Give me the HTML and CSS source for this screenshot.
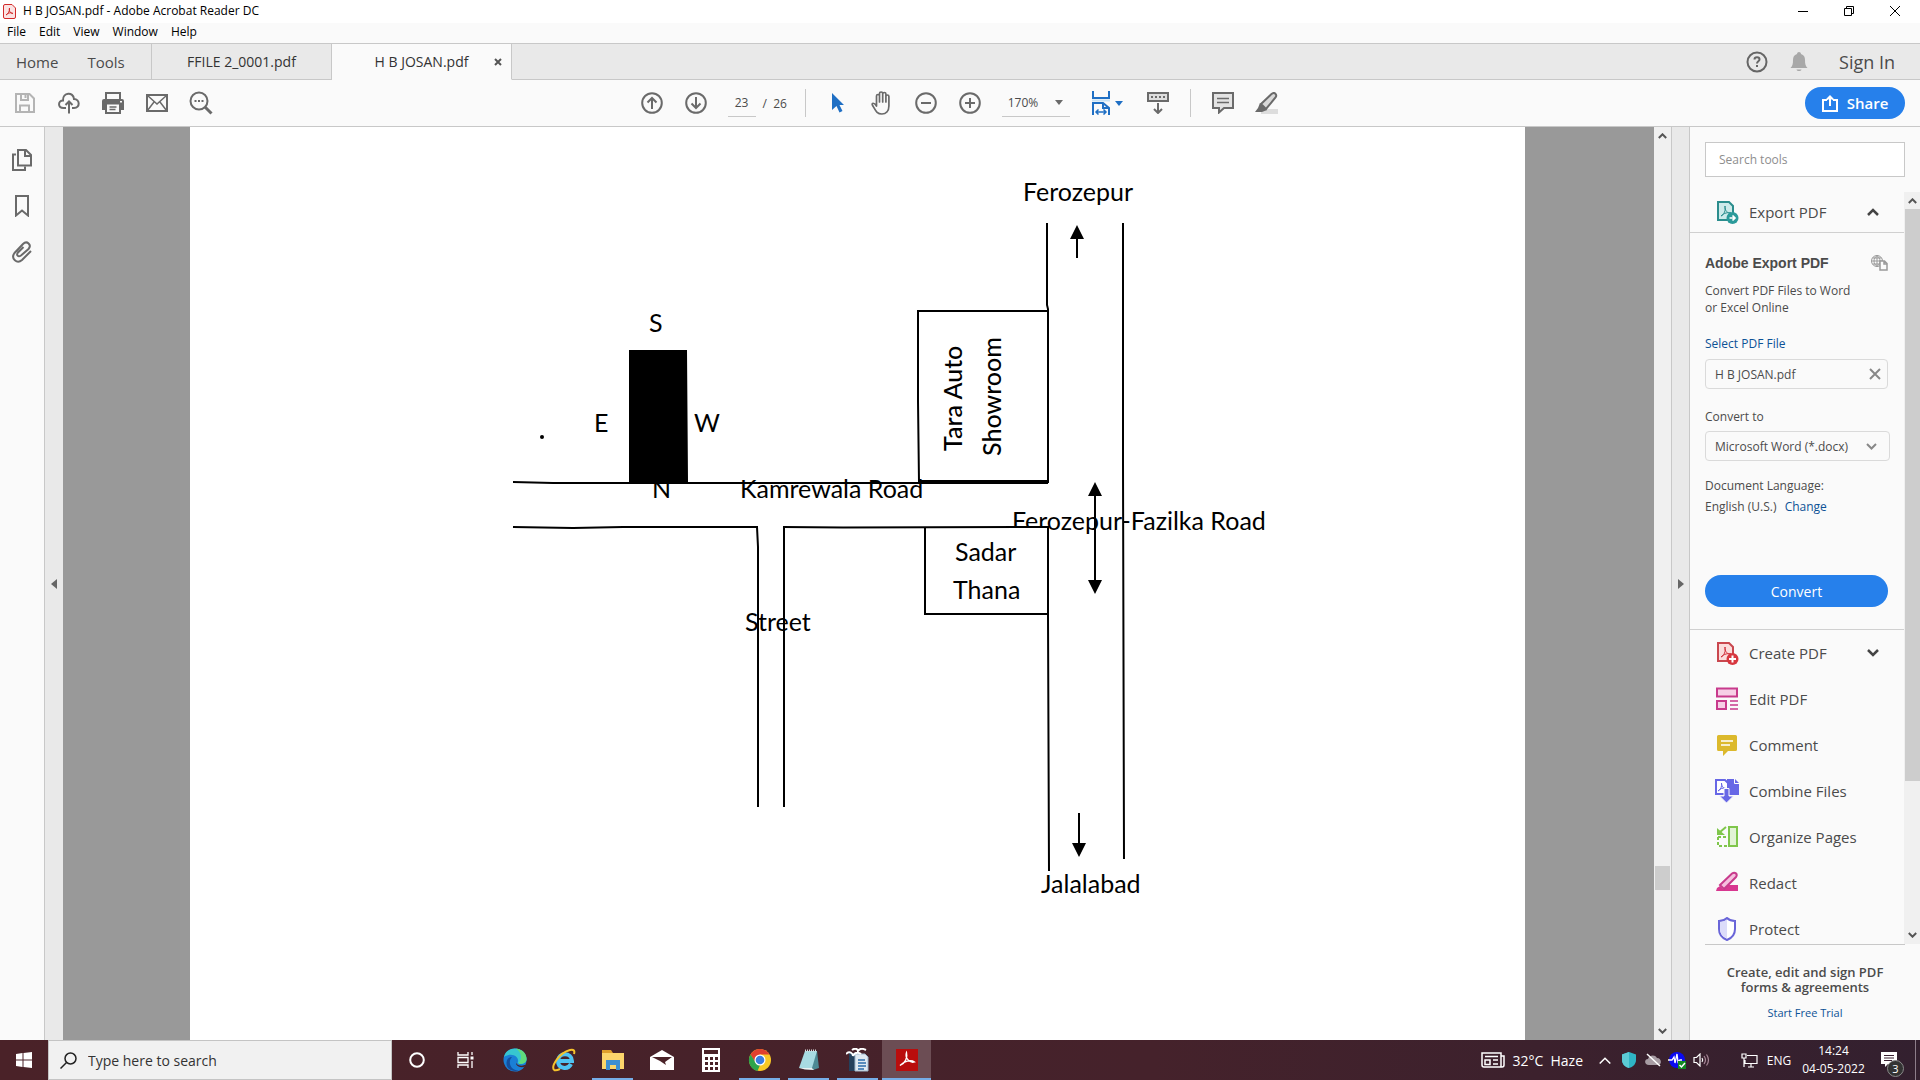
FILE: index.html
```html
<!DOCTYPE html>
<html lang="en">
<head>
<meta charset="utf-8">
<title>H B JOSAN.pdf - Adobe Acrobat Reader DC</title>
<link rel="stylesheet" href="styles.css">
</head>
<body>
<div class="desktop">
  <header class="titlebar">
    <svg class="app-icon" width="13" height="15" viewBox="0 0 13 15" fill="none" stroke="#d22a2a"><path fill="#fbe3e3" d="M2 .5h7L12.500 4v9q0 1.500-1.500 1.500H2Q.5 14.500.5 13V2Q.5.5 2 .5z"/><path d="M3 11c2-1 4-4 3.500-7C5.500 7 8 10 10 9.500 8 8 5 9 3 11z"/></svg>
    <h1 class="window-title">H B JOSAN.pdf - Adobe Acrobat Reader DC</h1>
    <div class="window-buttons">
      <button class="win-btn" aria-label="Minimize"><svg width="12" height="12" viewBox="0 0 12 12"><path d="M1 6.500h10" stroke="#000"/></svg></button>
      <button class="win-btn" aria-label="Restore"><svg width="12" height="12" viewBox="0 0 12 12" fill="none" stroke="#000"><path d="M1.500 3.500h7v7h-7zM3.500 3.500v-2h7v7h-2"/></svg></button>
      <button class="win-btn" aria-label="Close"><svg width="12" height="12" viewBox="0 0 12 12"><path d="M1 1l10 10M11 1L1 11" stroke="#000"/></svg></button>
    </div>
  </header>

  <nav class="menubar" aria-label="Menu">
    <button>File</button><button>Edit</button><button>View</button><button>Window</button><button>Help</button>
  </nav>

  <div class="tabbar">
    <div class="fixed-tabs"><button>Home</button><button>Tools</button></div>
    <div class="doc-tab"><button class="tab-name">FFILE 2_0001.pdf</button></div>
    <div class="doc-tab active"><button class="tab-name">H B JOSAN.pdf</button><button class="tab-close" aria-label="Close tab"><svg width="8" height="8" viewBox="0 0 8 8"><path d="M1 1l6 6M7 1L1 7" stroke="#555" stroke-width="2"/></svg></button></div>
    <div class="account">
      <button class="help" aria-label="Help"><svg width="22" height="22" viewBox="0 0 22 22" fill="none" stroke="#666"><circle cx="11" cy="11" r="9.500" stroke-width="2"/><path d="M8.500 8.500c0-3 5-3 5 0 0 1.800-2.500 1.800-2.500 4" stroke-width="2"/><path d="M11 14v2" stroke-width="2"/></svg></button>
      <button class="bell" aria-label="Notifications"><svg width="18" height="20" viewBox="0 0 18 20" fill="#a8a8a8"><path d="M9 0c1 0 2 .8 2 2 3 1 4 3 4 6 0 4 .5 6 2.500 8H.5C2.500 14 3 12 3 8c0-3 1-5 4-6 0-1.200 1-2 2-2zM6.500 17.500h5c-.5 2-4.500 2-5 0z"/></svg></button>
      <button class="signin">Sign In</button>
    </div>
  </div>

  <div class="toolbar">
    <div class="tools-left">
      <button aria-label="Save"><svg width="20" height="20" viewBox="0 0 20 20" fill="none" stroke="#b4b4b4" stroke-width="2"><path d="M1 1h13.500L19 5.500V19H1z"/><path d="M6 1v6h7V1M5 19v-6.500h9V19"/><path d="M10.500 2v3"/></svg></button>
      <button aria-label="Upload"><svg width="22" height="22" viewBox="0 0 22 22" fill="none" stroke="#6a6a6a" stroke-width="2"><path d="M8 16H5.500C-.5 16-.2 8.500 5 8.500 4.500 0 15.500-.5 16 7c6 0 6.500 9 0 9h-2"/><path d="M11 21.500V10M7.500 13L11 9.500l3.500 3.500"/></svg></button>
      <button aria-label="Print"><svg width="22" height="22" viewBox="0 0 22 22"><path fill="#6a6a6a" d="M3 0h16v7h1q2 0 2 2v9h-3v4H3v-4H0V9q0-2 2-2h1z"/><path fill="#fafafa" d="M5 2h12v5H5zM5 12.500h12V20H5zM18 9h2v1.500h-2z"/><path d="M7.500 15h7M7.500 17.500h6" stroke="#6a6a6a" stroke-width="1.500"/></svg></button>
      <button aria-label="Mail"><svg width="22" height="18" viewBox="0 0 22 18" fill="none" stroke="#6a6a6a"><path stroke-width="2" d="M1 1h20v16H1z"/><path stroke-width="1.500" d="M1.500 1.500L11 10l9.500-8.500M1.500 16.500L8 8M20.500 16.500L14 8"/></svg></button>
      <button aria-label="Find"><svg width="24" height="24" viewBox="0 0 24 24" fill="none" stroke="#6a6a6a"><circle cx="10" cy="10" r="8.500" stroke-width="2"/><path stroke-width="3" d="M16 16l6.500 6.500"/><path stroke-width="2" d="M5.500 10h2M9 10h2M12.500 10h2"/></svg></button>
    </div>
    <div class="tools-center">
      <button aria-label="Previous page"><svg width="22" height="22" viewBox="0 0 22 22" fill="none" stroke="#6a6a6a" stroke-width="2"><circle cx="11" cy="11" r="9.800"/><path d="M11 17V6M6.500 10.500L11 6l4.500 4.500"/></svg></button>
      <button aria-label="Next page"><svg width="22" height="22" viewBox="0 0 22 22" fill="none" stroke="#6a6a6a" stroke-width="2"><circle cx="11" cy="11" r="9.800"/><path d="M11 5v11M6.500 11.500L11 16l4.500-4.500"/></svg></button>
      <label class="page-no"><input type="text" value="23" aria-label="Page number"><span>/&nbsp; 26</span></label>
      <span class="divider"></span>
      <button aria-label="Select"><svg width="14" height="20" viewBox="0 0 14 20" fill="#1f6fc4"><path d="M1 0l12 12H8.500l3 6-3 1.500-3-6.500L1 17z"/></svg></button>
      <button aria-label="Pan"><svg width="22" height="24" viewBox="0 0 22 24" fill="none" stroke="#6a6a6a" stroke-width="1.700" stroke-linecap="round" stroke-linejoin="round"><path d="M5.500 15V5c0-2 3-2 3 0v6V2.500c0-2 3.200-2 3.200 0V11 3c0-2 3.200-2 3.200 0v8V5.500c0-2 3-2 3 0V15c0 5-3 8-7 8-5 0-6-3-9.500-9-1-2 1.500-3 4.100 1"/></svg></button>
      <button aria-label="Zoom out"><svg width="22" height="22" viewBox="0 0 22 22" fill="none" stroke="#6a6a6a" stroke-width="2"><circle cx="11" cy="11" r="9.800"/><path d="M6 11h10"/></svg></button>
      <button aria-label="Zoom in"><svg width="22" height="22" viewBox="0 0 22 22" fill="none" stroke="#6a6a6a" stroke-width="2"><circle cx="11" cy="11" r="9.800"/><path d="M6 11h10M11 6v10"/></svg></button>
      <button class="zoom-level">170%<svg width="8" height="5" viewBox="0 0 8 5"><path d="M0 0h8L4 5z" fill="#6a6a6a"/></svg></button>
      <button class="fit" aria-label="Fit width"><svg width="18" height="24" viewBox="0 0 18 24" fill="none" stroke="#1f6fc4" stroke-width="2"><path d="M0 9.500h18" stroke="#c8e2f5" stroke-width="2"/><path d="M1 0v7h16V0M1 24V12h10l6 5v7M11 12v5h6"/><path d="M4 21h10M6.500 18.500L4 21l2.500 2.500M11.500 18.500L14 21l-2.500 2.500" stroke-width="1.500"/></svg><svg width="8" height="5" viewBox="0 0 8 5"><path d="M0 0h8L4 5z" fill="#1f6fc4"/></svg></button>
      <button aria-label="Scrolling"><svg width="22" height="22" viewBox="0 0 22 22" fill="none" stroke="#6a6a6a" stroke-width="2"><path fill="#ddd" d="M1 1h20v8H1z"/><path d="M4 5h2M8 5h2M12 5h2M16 5h2M11 11v10M7 17l4 4 4-4"/></svg></button>
      <span class="divider"></span>
      <button aria-label="Comment"><svg width="22" height="22" viewBox="0 0 22 22" stroke="#6a6a6a" stroke-width="2"><path fill="#e3e3e3" d="M1 1h20v15H12l-5 4.500V16H1z"/><path d="M5 6.500h12M5 10.500h12" stroke-width="1.500"/></svg></button>
      <button aria-label="Highlight"><svg width="24" height="22" viewBox="0 0 24 22"><path fill="#ddd" d="M6 17h17v5H6z"/><path fill="#d8d8d8" stroke="#6a6a6a" stroke-width="2" d="M6 12L16.500 2c3-2.500 6 .5 4 3.500L11 17z"/><path fill="#6a6a6a" d="M5 11l7 7-5 2H0l3-4z"/></svg></button>
    </div>
    <div class="tools-right">
      <button class="share"><svg width="16" height="17" viewBox="0 0 16 17" fill="none" stroke="#fff" stroke-width="2"><path d="M5 5H1v11h14V5h-4M8 11V2M5 4.500L8 1.500l3 3"/></svg>Share</button>
    </div>
  </div>

  <main class="workspace">
    <aside class="rail">
      <button aria-label="Page thumbnails"><svg width="20" height="22" viewBox="0 0 20 22" fill="none" stroke="#6a6a6a" stroke-width="2"><path d="M4 5.500H1V21h12v-3.500"/><path fill="#fafafa" d="M6 1h8l5 5v10.500H6zM13 1v6h6"/></svg></button>
      <button aria-label="Bookmarks"><svg width="16" height="22" viewBox="0 0 16 22" fill="none" stroke="#6a6a6a" stroke-width="2"><path d="M2 1h12v19.500l-6-5-6 5z"/></svg></button>
      <button aria-label="Attachments"><svg width="22" height="22" viewBox="0 0 22 22" fill="none" stroke="#6a6a6a" stroke-width="2"><path d="M20 10l-9 9c-5 4.500-11.500-1.500-7.500-7l8.500-9c4-4 9 1 5.500 5L10 14.500c-3 2-5-.5-3-3L12.500 6"/></svg></button>
    </aside>
    <button class="collapse left" aria-label="Collapse left"><svg width="6" height="10" viewBox="0 0 6 10"><path d="M6 0v10L0 5z" fill="#666"/></svg></button>

    <section class="viewport">
      <div class="page">
        <svg class="map" viewBox="190 127 1335 913" role="img" aria-label="Location map">
          <g class="map-text">
            <text x="1023" y="201">Ferozepur</text>
            <text x="649" y="332">S</text>
            <text x="594" y="432">E</text>
            <text x="694" y="432">W</text>
            <text x="652" y="498">N</text>
            <text x="740" y="498">Kamrewala Road</text>
            <text x="1012" y="530">Ferozepur-Fazilka Road</text>
            <text x="745" y="631">Street</text>
            <text x="1041" y="893">Jalalabad</text>
          </g>
          <path fill="#fff" d="M925 528h123v86H925z"/>
          <g class="map-text">
            <text x="955" y="561">Sadar</text>
            <text x="953" y="599">Thana</text>
          </g>
          <g class="map-text strong">
            <text transform="translate(962 451) rotate(-90)">Tara Auto</text>
            <text transform="translate(1001 456) rotate(-90)">Showroom</text>
          </g>
          <g fill="none" stroke="#000" stroke-width="2">
            <path d="M1047 223v82l1 4v173M1048 526v90l1 255M1123 223v240l1 396"/>
            <path d="M1048 311H918v90l1 81"/>
            <path d="M513 482l40 1h495M513 527l60 1 50-1h135M783 527l60 .500 205-.500"/>
            <path d="M919 481.500h130" stroke-width="3"/>
            <path d="M757 527l1 20v260M784 527v280M925 527v87h123"/>
            <path d="M1077 236v22M1079 813v34"/>
            <path d="M1095 492v92"/>
          </g>
          <path d="M629 350h58l1 132h-59zM1077 225l7 14h-14zM1095 482l7 14h-14zM1095 594l7-14h-14zM1079 857l7-14h-14z"/>
          <circle cx="542" cy="437" r="2"/>
        </svg>
      </div>
    </section>

    <div class="scrollbar doc-scroll">
      <svg width="9" height="6" viewBox="0 0 9 6" fill="none" stroke="#555" stroke-width="2"><path d="M.8 5l3.700-3.700L8.200 5"/></svg>
      <span class="thumb"></span>
      <svg width="9" height="6" viewBox="0 0 9 6" fill="none" stroke="#555" stroke-width="2"><path d="M.8 1l3.700 3.700L8.200 1"/></svg>
    </div>
    <button class="collapse right" aria-label="Collapse tools"><svg width="6" height="10" viewBox="0 0 6 10"><path d="M0 0v10l6-5z" fill="#666"/></svg></button>

    <aside class="panel">
      <input class="search-tools" type="text" placeholder="Search tools" aria-label="Search tools">
      <div class="panel-body">
        <div class="panel-scroll">
          <button class="tool head"><svg width="24" height="24" viewBox="0 0 24 24"><path fill="#cdeaea" stroke="#2b8d8d" stroke-width="2" d="M3 2h11l4 4v14H3z"/><path fill="none" stroke="#2b8d8d" d="M6 16c3-1 5-6 4-10-1 4 3 8 6 7-3-1-7 0-10 3z"/><circle cx="17.500" cy="18" r="6" fill="#2b9a9a"/><path d="M14.500 18h5M17.500 15.500L20 18l-2.500 2.500" stroke="#fff" stroke-width="1.700" fill="none"/></svg><span>Export PDF</span><svg class="chev" width="12" height="8" viewBox="0 0 12 8" fill="none" stroke="#444" stroke-width="2.500"><path d="M1 7l5-5 5 5"/></svg></button>
          <div class="export">
            <div class="export-title"><h2>Adobe Export PDF</h2><svg width="17" height="16" viewBox="0 0 17 16" fill="none" stroke="#999"><circle cx="6" cy="6" r="5.500"/><path d="M.5 6h11M6 .5v11M6 .5c-4 3-4 8 0 11M6 .5c4 3 4 8 0 11M1.500 3h9M1.500 9h9"/><path fill="#fafafa" stroke-width="1.500" d="M9 6h4.500l2.500 2.500V15H9zM13 6v3h3"/></svg></div>
            <p class="lead">Convert PDF Files to Word<br>or Excel Online</p>
            <a class="select-file" href="#">Select PDF File</a>
            <div class="file-box"><span>H B JOSAN.pdf</span><button aria-label="Remove file"><svg width="12" height="12" viewBox="0 0 12 12"><path d="M1 1l10 10M11 1L1 11" stroke="#888" stroke-width="2"/></svg></button></div>
            <label class="convert-label" for="format">Convert to</label>
            <div class="format-box"><select id="format"><option>Microsoft Word (*.docx)</option></select><svg width="11" height="7" viewBox="0 0 11 7" fill="none" stroke="#888" stroke-width="2"><path d="M1 1l4.500 4.500L10 1"/></svg></div>
            <p class="language">Document Language:<br>English (U.S.) <a href="#">Change</a></p>
            <button class="convert">Convert</button>
          </div>
          <button class="tool"><svg width="24" height="24" viewBox="0 0 24 24"><path fill="#fbdcdc" stroke="#c9474e" stroke-width="2" d="M3 2h11l4 4v14H3z"/><path fill="none" stroke="#d22f3a" d="M6 16c3-1 5-6 4-10-1 4 3 8 6 7-3-1-7 0-10 3z"/><circle cx="17.500" cy="18" r="6" fill="#d7373f"/><path d="M14 18h7M17.500 14.500v7" stroke="#fff" stroke-width="2"/></svg><span>Create PDF</span><svg class="chev" width="12" height="8" viewBox="0 0 12 8" fill="none" stroke="#444" stroke-width="2.500"><path d="M1 1l5 5 5-5"/></svg></button>
          <button class="tool"><svg width="24" height="24" viewBox="0 0 24 24" fill="#f7cfe6" stroke="#c83a8c" stroke-width="2"><path d="M2 1.500h20v8H2zM2 14h9v8H2z"/><path d="M15 14h8M15 18h8M15 22h8" stroke-width="1.500"/></svg><span>Edit PDF</span></button>
          <button class="tool"><svg width="24" height="24" viewBox="0 0 24 24"><path fill="#dcb92c" d="M3.500 2h17q1.500 0 1.500 1.500v13q0 1.500-1.500 1.500H13l-5 5v-5H3.500Q2 18 2 16.500v-13Q2 2 3.500 2z"/><path d="M6 8h12M6 12h9" stroke="#fff" stroke-width="1.700"/></svg><span>Comment</span></button>
          <button class="tool"><svg width="24" height="24" viewBox="0 0 24 24"><path fill="#6767e6" d="M12 0h8l4 4v12H12z"/><path d="M19.500 0v4.500H24" fill="none" stroke="#fff"/><path fill="#fff" stroke="#6767e6" stroke-width="2" d="M1 1h9l3 3v11H1z"/><path fill="none" stroke="#6767e6" d="M3 12c3-1 4-5 3.500-8 0 3 2 6 4.500 5.500-3-1-6 0-8 2.500z"/><path fill="#6767e6" stroke="#fafafa" d="M9 9.500h5V17h4.500l-7 7-7-7H9z"/></svg><span>Combine Files</span></button>
          <button class="tool"><svg width="24" height="24" viewBox="0 0 24 24" fill="none" stroke="#7fc64b" stroke-width="2"><path fill="#e2f3d6" d="M14 2h8v19h-8z"/><path stroke-dasharray="3 2" d="M3 12h9M3 12v9h9"/><path d="M11 2L5 7"/><path fill="#7fc64b" stroke="none" d="M2 3v7h8z"/></svg><span>Organize Pages</span></button>
          <button class="tool"><svg width="24" height="24" viewBox="0 0 24 24"><path fill="#d83790" d="M10 16l3-2h10v6H8zM2 17l3-2 5 5H1z"/><path fill="#f5bfde" stroke="#c83a8c" stroke-width="2" d="M5 14L17 2.500c3-2 6 .5 4 3.500L9 18z"/></svg><span>Redact</span></button>
          <button class="tool"><svg width="24" height="24" viewBox="0 0 24 24"><path fill="#fff" stroke="#6965d8" stroke-width="2" d="M12 1c2 2 5 3 8 3v8c0 5-3 9-8 11-5-2-8-6-8-11V4c3 0 6-1 8-3z"/><path fill="#dcdcfa" d="M12 2.500V21.500c-4-2-7-5-7-9.500V5c3 0 5-1 7-2.500z"/></svg><span>Protect</span></button>
        </div>
        <div class="scrollbar panel-bar">
          <svg width="9" height="6" viewBox="0 0 9 6" fill="none" stroke="#555" stroke-width="2"><path d="M.8 5l3.700-3.700L8.200 5"/></svg>
          <span class="thumb"></span>
          <svg width="9" height="6" viewBox="0 0 9 6" fill="none" stroke="#555" stroke-width="2"><path d="M.8 1l3.700 3.700L8.200 1"/></svg>
        </div>
      </div>
      <footer class="promo">
        <p>Create, edit and sign PDF<br>forms &amp; agreements</p>
        <a href="#">Start Free Trial</a>
      </footer>
    </aside>
  </main>

  <footer class="taskbar">
    <button class="start" aria-label="Start"><svg width="16" height="16" viewBox="0 0 16 16" fill="#fff"><path d="M0 2l6.500-1v6.500H0zM7.500 1L16 0v7.500H7.500zM0 8.500h6.500V15L0 14zM7.500 8.500H16V16l-8.500-1z"/></svg></button>
    <label class="task-search"><svg width="17" height="17" viewBox="0 0 17 17" fill="none" stroke="#222" stroke-width="1.500"><circle cx="10.500" cy="6.500" r="5.500"/><path d="M6.500 10.500L.5 16.500"/></svg><input type="text" placeholder="Type here to search" aria-label="Type here to search"></label>
    <div class="apps">
      <button aria-label="Cortana"><svg width="18" height="18" viewBox="0 0 18 18"><circle cx="9" cy="9" r="6.800" fill="none" stroke="#fff" stroke-width="2"/></svg></button>
      <button aria-label="Task view"><svg width="17" height="16" viewBox="0 0 17 16" fill="none" stroke="#fff" stroke-width="1.300"><path d="M1 0v3h10V0M1 5.500h10v5H1zM1 16v-3h10v3M15 0v3M15 9v7"/><path fill="#fff" stroke="none" d="M13.500 4.500h3v3h-3z"/></svg></button>
      <button aria-label="Edge"><svg width="24" height="24" viewBox="0 0 24 24"><circle cx="12" cy="12" r="11.500" fill="#1a7fd6"/><path fill="#37c6d0" d="M1 9C3-3 23-2 23.500 11c0 5-6 6-9 4 3-5-5-12-13.500-6z"/><path fill="#5fdc7c" d="M13 .6c7 1 11 6 10.500 11-.5 4-5 5-8 4C20 10 18 4 13 .6z"/><path fill="#4a2228" d="M13.500 12c-2 4 3 7 8 5 1 0 1.500 0 .5 1.500-3 1.500-11 1-8.500-6.500z"/><path fill="#144f9e" d="M9 9c-5 5-1 14 7 13.500-7 2-13-2-12.500-8C4 11 6 9 9 9z"/></svg></button>
      <button aria-label="Internet Explorer"><svg width="24" height="24" viewBox="0 0 24 24" fill="none"><path d="M19 16c-3 6-13 5-13-3 0-9 14-9 14 0H7" stroke="#4fc3f2" stroke-width="4"/><path d="M2 22c-3-4 5-17 16-20 4-1 5 1 4 4M2 22c2 1 4 0 6-1" stroke="#f6c22c" stroke-width="2"/></svg></button>
      <button class="open" aria-label="File Explorer"><svg width="22" height="20" viewBox="0 0 22 20"><path fill="#e0a02c" d="M0 0h9l2 3H0z"/><path fill="#fcd56b" d="M0 3h22v16H0z"/><path fill="#3f8fd2" d="M4 10h14v10h-4v-5H8v5H4z"/></svg></button>
      <button aria-label="Mail"><svg width="24" height="20" viewBox="0 0 24 20"><path fill="#fff" d="M12 0l12 7v13H0V7z"/><path fill="#4a2228" d="M2 7h20l-7 5 1 3-6-4z"/></svg></button>
      <button aria-label="Calculator"><svg width="18" height="24" viewBox="0 0 18 24"><path fill="#fff" d="M0 0h18v24H0z"/><path fill="#4a2228" d="M2 2h14v4H2zM3 9h3v3H3zM8 9h3v3H8zM13 9h3v3h-3zM3 14h3v3H3zM8 14h3v3H8zM13 14h3v3h-3zM3 19h3v3H3zM8 19h3v3H8zM13 19h3v3h-3z"/></svg></button>
      <button class="open" aria-label="Chrome"><svg width="24" height="24" viewBox="0 0 24 24"><circle cx="12" cy="12" r="11" fill="#f9c825"/><path fill="#e0402f" d="M2.500 6.500a11 11 0 0 1 19 0H12L7 14z"/><path fill="#2ea44c" d="M2.500 6.500L8 15l4 2-2.500 6A11 11 0 0 1 2.500 6.500z"/><circle cx="12" cy="12" r="5.500" fill="#fff"/><circle cx="12" cy="12" r="4.300" fill="#3b7de0"/></svg></button>
      <button class="open" aria-label="Notepad"><svg width="24" height="24" viewBox="0 0 24 24"><path fill="#4d8a94" d="M9 3h11l2 17-6 2z"/><path fill="#a8dbe2" d="M8 3h12l-5 17H2z"/><path d="M8 2.500h12" stroke="#ddd" stroke-width="2" stroke-dasharray="1 1"/><path fill="#e9f4f4" d="M2 20h13l2 2-9-.5z"/></svg></button>
      <button class="open" aria-label="Writer"><svg width="24" height="24" viewBox="0 0 24 24"><path fill="#24405c" d="M3 5h10v18H3z"/><path fill="#dfe9f2" stroke="#9db6cc" d="M9 6h10l3 3v14H9z"/><path d="M12 12h7M12 15h8M12 18h8M12 21h6" stroke="#2c6cab" stroke-width="1.500"/><path d="M0 6c4-4 7 0 7 2 2-5 7-3 8-2M6 2c4-3 6 0 6 1 2-3 6-2 8-1" fill="none" stroke="#fff" stroke-width="2"/></svg></button>
      <button class="open current" aria-label="Acrobat Reader"><svg width="22" height="22" viewBox="0 0 22 22"><path fill="#b90d0d" d="M0 0h22v22H0z"/><path fill="none" stroke="#fff" stroke-width="1.300" d="M4 16.500c5-2 8-8 6.500-13-2 5 3 11 8 9.500C15 10.500 8 12 4 16.500z"/></svg></button>
    </div>
    <div class="tray">
      <button class="weather"><svg width="24" height="16" viewBox="0 0 24 16" fill="none" stroke="#fff" stroke-width="1.500"><path d="M1 1h19v14H3q-2 0-2-2zM20 4h3v9q0 2-2 2H4M4 4.500h13M4 8h5v4.500H4zM12 8h5M12 12h5"/></svg><span>32°C&nbsp; Haze</span></button>
      <button aria-label="Hidden icons"><svg width="12" height="7" viewBox="0 0 12 7" fill="none" stroke="#fff" stroke-width="1.500"><path d="M.7 6.500L6 1.200l5.300 5.300"/></svg></button>
      <button aria-label="Security"><svg width="14" height="16" viewBox="0 0 14 16"><path fill="#2fb5c5" d="M7 0l7 2.500V8c0 4-3 7-7 8-4-1-7-4-7-8V2.500z"/><path fill="#5ccbd5" d="M7 0v16c-4-1-7-4-7-8V2.500z"/></svg></button>
      <button aria-label="OneDrive"><svg width="17" height="14" viewBox="0 0 17 14"><path fill="#a79ca3" d="M4 12c-5 0-5-6-1-6 1-4 7-5 9-1 5 0 5 7 1 7z"/><path d="M2 1l13 12" stroke="#fff" stroke-width="1.500"/></svg></button>
      <button aria-label="Audio status"><svg width="18" height="18" viewBox="0 0 18 18"><circle cx="9" cy="9" r="8" fill="#0a0af0"/><path d="M0 9h4l2-3 1 6 2-9 1 8 2-2h2" fill="none" stroke="#fff" stroke-width="1.300"/><path fill="#118a22" d="M10 10h8v8h-8z"/><path d="M11.500 14l2 2 3.500-4" stroke="#fff" stroke-width="1.500" fill="none"/></svg></button>
      <button aria-label="Volume"><svg width="17" height="14" viewBox="0 0 17 14" fill="none" stroke="#fff" stroke-width="1.200"><path d="M1 4.500h2.500L7 1v12L3.500 9.500H1z"/><path d="M9 5q1.500 2 0 4"/><path d="M11 3q3 4 0 8M13.500 1.500q4 5.500 0 11" stroke="#a89"/></svg></button>
      <span class="tray-space"></span>
      <button aria-label="Network"><svg width="17" height="15" viewBox="0 0 17 15" fill="none" stroke="#fff" stroke-width="1.200"><path d="M6 2.500h10v8H4V7M10 10.500V14M7 14h6M1 1h4v4H1zM3 5v9"/></svg></button>
      <button class="lang">ENG</button>
      <button class="clock"><span>14:24</span><span>04-05-2022</span></button>
      <button class="notif" aria-label="3 notifications"><svg width="18" height="18" viewBox="0 0 18 18"><path fill="#fff" d="M1 1h16v12H8l-3 3v-3H1z"/><path d="M4 4.500h10M4 7h10M4 9.500h8" stroke="#3a2031"/></svg><span class="badge">3</span></button>
      <span class="show-desktop"></span>
    </div>
  </footer>
</div>
</body>
</html>
```
FILE: styles.css
```css
* { box-sizing: border-box; }
body { margin: 0; font-family: "Open Sans", "Noto Sans", sans-serif; color: #4b4b4b; }
button { font: inherit; color: inherit; background: none; border: 0; padding: 0; margin: 0; display: flex; align-items: center; justify-content: center; white-space: nowrap; }
input, select { font: inherit; color: inherit; margin: 0; }
h1, h2, p { margin: 0; font-weight: 400; }
a { color: #0d5296; text-decoration: none; }
svg { display: block; flex: none; }

.desktop { height: 100vh; display: flex; flex-direction: column; overflow: hidden; background: #fafafa; }

.titlebar { height: 23px; flex: none; display: flex; align-items: center; background: #fff; padding: 0 2px 1px 3px; color: #000; }
.window-title { font-size: 12px; line-height: 20px; margin-left: 7px; flex: 1; }
.window-buttons { display: flex; }
.win-btn { width: 46px; height: 20px; }

.menubar { height: 21px; flex: none; display: flex; gap: 13px; padding: 0 0 2px 7px; border-bottom: 1px solid #c8c8c8; font-size: 12px; line-height: 16px; color: #000; }

.tabbar { height: 36px; flex: none; display: flex; background: #e9e9e9; }
.fixed-tabs { width: 152px; display: flex; gap: 29px; padding-left: 16px; font-size: 15px; border-right: 1px solid #c8c8c8; border-bottom: 1px solid #c8c8c8; }
.doc-tab { width: 180px; display: flex; justify-content: center; position: relative; font-size: 14px; color: #333; border-right: 1px solid #c8c8c8; border-bottom: 1px solid #c8c8c8; }
.doc-tab.active { background: #fafafa; border-bottom-color: #fafafa; }
.tab-close { position: absolute; right: 9px; top: 14px; }
.account { flex: 1; display: flex; justify-content: flex-end; padding-right: 25px; border-bottom: 1px solid #c8c8c8; font-size: 18px; }
.bell { margin: 0 31px 0 22px; }
.signin { font-weight: 500; }

.toolbar { height: 47px; flex: none; display: grid; grid-template-columns: 1fr auto 1fr; align-items: center; border-bottom: 1px solid #c8c8c8; font-size: 12px; }
.tools-left { display: flex; padding-left: 3px; }
.tools-left button { width: 44px; height: 44px; }
.tools-center { display: flex; align-items: center; padding-right: 2px; }
.tools-center button { width: 44px; height: 44px; }
.page-no { display: flex; align-items: center; gap: 7px; width: 62px; margin: 0 15px 0 10px; white-space: nowrap; }
.page-no input { width: 28px; height: 27px; border: 0; border-bottom: 1px solid #c8c8c8; background: none; text-align: center; padding: 0; }
.divider { width: 1px; height: 28px; background: #c8c8c8; margin: 0 10px; }
.page-no + .divider { margin-left: 0; }
.tools-center .zoom-level { width: 68px; height: 27px; margin: 0 10px; gap: 17px; border-bottom: 1px solid #c8c8c8; }
.tools-center .fit { width: 56px; gap: 5px; }
.tools-right { display: flex; justify-content: flex-end; padding-right: 15px; }
.share { width: 100px; height: 32px; border-radius: 16px; background: #2680eb; color: #fff; font-size: 15px; font-weight: 600; gap: 9px; }

.workspace { flex: 1; min-height: 0; display: flex; }
.rail { width: 45px; border-right: 1px solid #c8c8c8; display: flex; flex-direction: column; padding-top: 10px; }
.rail button { height: 46px; }
.collapse { background: #e9e9e9; }
.collapse.left { width: 18px; }
.collapse.right { width: 19px; border: solid #c8c8c8; border-width: 0 1px; }
.viewport { flex: 1; min-width: 0; overflow: hidden; background: #999; padding: 0 129px 0 127px; }
.page { min-height: 100%; background: #fff; }
.map { width: 100%; height: auto; }
.map-text { font-family: Lato, "Open Sans", sans-serif; font-size: 25px; fill: #000; }
.map-text.strong { font-weight: 500; }

.scrollbar { background: #f0f0f0; display: flex; flex-direction: column; align-items: center; padding: 6px 0; }
.thumb { width: 15px; background: #cdcdcd; }
.doc-scroll { width: 17px; }
.doc-scroll .thumb { height: 24px; margin: 727px 0 auto; }
.panel-bar { width: 16px; }
.panel-bar .thumb { height: 572px; margin: 5px 0 auto; }

.panel { width: 230px; display: flex; flex-direction: column; font-size: 12px; }
.search-tools { height: 35px; flex: none; margin: 15px; padding: 0 13px; border: 1px solid #c8c8c8; background: #fff; }
.search-tools::placeholder { color: #8e8e8e; }
.panel-body { flex: 1; min-height: 0; display: flex; }
.panel-scroll { flex: 1; overflow: hidden; }
.tool { width: 100%; height: 46px; padding: 0 25px; justify-content: flex-start; font-size: 15px; gap: 10px; }
.tool .chev { margin-left: auto; }
.tool.head { height: 40px; }
.export { border: solid #d0d0d0; border-width: 1px 0; padding: 20px 16px 22px 15px; height: 398px; display: flex; flex-direction: column; }
.export-title { display: flex; justify-content: space-between; align-items: center; height: 20px; }
h2 { font-family: "Liberation Sans", sans-serif; font-size: 14px; font-weight: 700; }
.lead { line-height: 17px; margin-top: 9px; }
.select-file { line-height: 18px; margin-top: 19px; }
.file-box { height: 30px; margin-top: 6px; border: 1px solid #dadada; border-radius: 4px; display: flex; align-items: center; justify-content: space-between; padding: 0 6px 0 9px; }
.convert-label { line-height: 18px; margin-top: 19px; }
.format-box { height: 30px; margin: 5px -2px 0 0; border: 1px solid #dadada; border-radius: 4px; display: flex; align-items: center; padding: 0 12px 0 9px; }
.format-box select { flex: 1; min-width: 0; appearance: none; border: 0; background: none; padding: 0; }
.language { line-height: 21px; margin-top: 14px; }
.language a { margin-left: 5px; }
.convert { height: 32px; flex: none; margin-top: auto; border-radius: 16px; background: #2680eb; color: #fff; font-size: 14px; }
.promo { height: 96px; flex: none; margin: 0 15px; border-top: 1px solid #c8c8c8; text-align: center; padding-top: 20px; }
.promo p { font-weight: 600; line-height: 15px; font-size: 13px; }
.promo a { display: block; line-height: 20px; margin-top: 8px; font-size: 11px; }

.taskbar { height: 40px; flex: none; display: flex; background: linear-gradient(90deg, #4a2228, #45222b 60%, #33202f); color: #fff; }
.start { width: 48px; }
.task-search { width: 344px; background: #f1f1f1; border: 1px solid #c4c4c4; display: flex; align-items: center; gap: 11px; padding-left: 11px; }
.task-search input { flex: 1; min-width: 0; border: 0; background: none; padding: 0; font-size: 14px; }
.task-search input::placeholder { color: #333; }
.apps { display: flex; }
.apps button { width: 49px; height: 40px; position: relative; }
.apps .open::after { content: ""; position: absolute; bottom: 0; left: 4px; right: 4px; height: 2px; background: #76aee8; }
.apps .current { background: #6c4d54; }
.apps .current::after { left: 0; right: 0; }
.tray { flex: 1; display: flex; justify-content: flex-end; font-size: 12px; }
.tray button { width: 24px; }
.tray .weather { width: auto; gap: 7px; margin-right: 10px; font-size: 14px; }
.tray-space { width: 24px; }
.tray .lang { width: 36px; }
.tray .clock { width: 73px; flex-direction: column; line-height: 18px; }
.tray .notif { width: 37px; margin-right: 8px; position: relative; }
.badge { position: absolute; left: 17px; top: 20px; width: 17px; height: 17px; border: 1px solid #8a8a8a; border-radius: 50%; background: #333; font-size: 11px; line-height: 15px; text-align: center; }
.show-desktop { width: 5px; border-left: 1px solid #8d7d8a; }
```
